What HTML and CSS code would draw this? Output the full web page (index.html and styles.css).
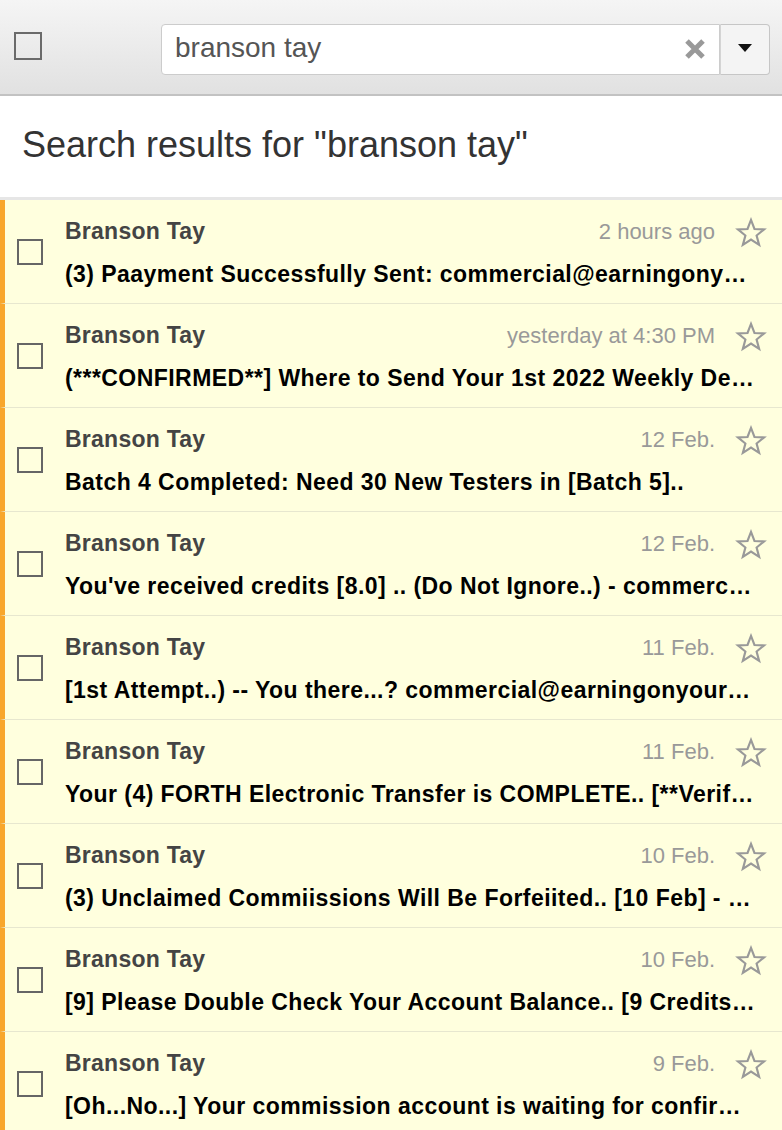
FILE: index.html
```html
<!DOCTYPE html>
<html>
<head>
    <meta charset="utf-8" />
    <title>Search results</title>
    <link rel="stylesheet" href="styles.css">
</head>
<body>
    <div class="toolbar">
        <span class="check check-all"></span>
        <div class="search">
            <div class="search-box">
                <span class="search-text">branson tay</span>
                <svg class="clear" width="22" height="22" viewBox="0 0 22 22">
                    <path d="M3 3 L19 19 M19 3 L3 19" stroke="#999" stroke-width="5" fill="none" />
                </svg>
            </div>
            <div class="search-drop"><span class="caret"></span></div>
        </div>
    </div>

    <div class="title">
        <h1>Search results for "branson tay"</h1>
    </div>

    <ul class="mails">
        <li class="mail">
            <span class="check"></span>
            <div class="mail-body">
                <div class="mail-top">
                    <strong class="sender">Branson Tay</strong>
                    <span class="date">2 hours ago</span>
                    <svg class="star" viewBox="0 0 24 24"><polygon points="12,2.2 14.6,9 21.8,9.3 16.2,13.9 18.1,20.9 12,16.9 5.9,20.9 7.8,13.9 2.2,9.3 9.4,9" /></svg>
                </div>
                <p class="subject">(3) Paayment Successfully Sent: commercial@earningonyourtime.com</p>
            </div>
        </li>
        <li class="mail">
            <span class="check"></span>
            <div class="mail-body">
                <div class="mail-top">
                    <strong class="sender">Branson Tay</strong>
                    <span class="date">yesterday at 4:30 PM</span>
                    <svg class="star" viewBox="0 0 24 24"><polygon points="12,2.2 14.6,9 21.8,9.3 16.2,13.9 18.1,20.9 12,16.9 5.9,20.9 7.8,13.9 2.2,9.3 9.4,9" /></svg>
                </div>
                <p class="subject">(***CONFIRMED**] Where to Send Your 1st 2022 Weekly Deposit</p>
            </div>
        </li>
        <li class="mail">
            <span class="check"></span>
            <div class="mail-body">
                <div class="mail-top">
                    <strong class="sender">Branson Tay</strong>
                    <span class="date">12 Feb.</span>
                    <svg class="star" viewBox="0 0 24 24"><polygon points="12,2.2 14.6,9 21.8,9.3 16.2,13.9 18.1,20.9 12,16.9 5.9,20.9 7.8,13.9 2.2,9.3 9.4,9" /></svg>
                </div>
                <p class="subject">Batch 4 Completed: Need 30 New Testers in [Batch 5]..</p>
            </div>
        </li>
        <li class="mail">
            <span class="check"></span>
            <div class="mail-body">
                <div class="mail-top">
                    <strong class="sender">Branson Tay</strong>
                    <span class="date">12 Feb.</span>
                    <svg class="star" viewBox="0 0 24 24"><polygon points="12,2.2 14.6,9 21.8,9.3 16.2,13.9 18.1,20.9 12,16.9 5.9,20.9 7.8,13.9 2.2,9.3 9.4,9" /></svg>
                </div>
                <p class="subject">You've received credits [8.0] .. (Do Not Ignore..) - commercial@earningonyourtime.com</p>
            </div>
        </li>
        <li class="mail">
            <span class="check"></span>
            <div class="mail-body">
                <div class="mail-top">
                    <strong class="sender">Branson Tay</strong>
                    <span class="date">11 Feb.</span>
                    <svg class="star" viewBox="0 0 24 24"><polygon points="12,2.2 14.6,9 21.8,9.3 16.2,13.9 18.1,20.9 12,16.9 5.9,20.9 7.8,13.9 2.2,9.3 9.4,9" /></svg>
                </div>
                <p class="subject">[1st Attempt..) -- You there...? commercial@earningonyourtime.com</p>
            </div>
        </li>
        <li class="mail">
            <span class="check"></span>
            <div class="mail-body">
                <div class="mail-top">
                    <strong class="sender">Branson Tay</strong>
                    <span class="date">11 Feb.</span>
                    <svg class="star" viewBox="0 0 24 24"><polygon points="12,2.2 14.6,9 21.8,9.3 16.2,13.9 18.1,20.9 12,16.9 5.9,20.9 7.8,13.9 2.2,9.3 9.4,9" /></svg>
                </div>
                <p class="subject">Your (4) FORTH Electronic Transfer is COMPLETE.. [**Verification Needed**]</p>
            </div>
        </li>
        <li class="mail">
            <span class="check"></span>
            <div class="mail-body">
                <div class="mail-top">
                    <strong class="sender">Branson Tay</strong>
                    <span class="date">10 Feb.</span>
                    <svg class="star" viewBox="0 0 24 24"><polygon points="12,2.2 14.6,9 21.8,9.3 16.2,13.9 18.1,20.9 12,16.9 5.9,20.9 7.8,13.9 2.2,9.3 9.4,9" /></svg>
                </div>
                <p class="subject">(3) Unclaimed Commiissions Will Be Forfeiited.. [10 Feb] - commercial@earningonyourtime.com</p>
            </div>
        </li>
        <li class="mail">
            <span class="check"></span>
            <div class="mail-body">
                <div class="mail-top">
                    <strong class="sender">Branson Tay</strong>
                    <span class="date">10 Feb.</span>
                    <svg class="star" viewBox="0 0 24 24"><polygon points="12,2.2 14.6,9 21.8,9.3 16.2,13.9 18.1,20.9 12,16.9 5.9,20.9 7.8,13.9 2.2,9.3 9.4,9" /></svg>
                </div>
                <p class="subject">[9] Please Double Check Your Account Balance.. [9 Credits Pending]</p>
            </div>
        </li>
        <li class="mail">
            <span class="check"></span>
            <div class="mail-body">
                <div class="mail-top">
                    <strong class="sender">Branson Tay</strong>
                    <span class="date">9 Feb.</span>
                    <svg class="star" viewBox="0 0 24 24"><polygon points="12,2.2 14.6,9 21.8,9.3 16.2,13.9 18.1,20.9 12,16.9 5.9,20.9 7.8,13.9 2.2,9.3 9.4,9" /></svg>
                </div>
                <p class="subject">[Oh...No...] Your commission account is waiting for confirmation</p>
            </div>
        </li>
    </ul>
</body>
</html>
```

FILE: styles.css
```css
* { margin: 0; border: 0; padding: 0; box-sizing: border-box; }

body {
    background: #ffffde;
    font-family: "Liberation Sans", Arial, sans-serif;
    overflow: hidden;
}

.check {
    display: block;
    flex: none;
    width: 26px;
    height: 26px;
    border: 2px solid #666;
}

/* top bar with search */
.toolbar {
    height: 96px;
    padding: 0 12px 0 14px;
    display: flex;
    align-items: center;
    background: linear-gradient(#f5f5f5, #e1e1e1);
    border-bottom: 2px solid #c2c2c2;
}

.toolbar .check-all {
    width: 28px;
    height: 28px;
    border-color: #6a6a6a;
    margin-top: -2px;
}

.search {
    flex: 1;
    margin-left: 119px;
    height: 51px;
    margin-top: 4px;
    display: flex;
}

.search-box {
    flex: 1;
    display: flex;
    align-items: center;
    padding: 0 13px 0 13px;
    background: #fff;
    border: 1px solid #ccc;
    border-radius: 4px 0 0 4px;
}

.search-text {
    flex: 1;
    font-size: 28px;
    color: #555;
    padding-bottom: 3px;
}

.clear { display: block; }

.search-drop {
    width: 50px;
    display: flex;
    align-items: center;
    justify-content: center;
    background: #f4f4f4;
    border: 1px solid #c6c6c6;
    border-left: 1px solid #d4d4d4;
    border-radius: 0 4px 4px 0;
}

.caret {
    width: 0;
    height: 0;
    border-left: 7.5px solid transparent;
    border-right: 7.5px solid transparent;
    border-top: 8px solid #111;
    margin-bottom: 3px;
}

.title {
    height: 104px;
    padding-left: 22px;
    display: flex;
    align-items: center;
    background: #fff;
    border-bottom: 3px solid #e6e6e6;
}

.title h1 {
    font-size: 36px;
    font-weight: normal;
    color: #333;
    padding-bottom: 4px;
}

/* result list */
.mails { list-style-type: none; }

.mail {
    height: 104px;
    display: flex;
    align-items: center;
    padding-left: 12px;
    border-left: 5px solid #f8a62c;
    border-bottom: 1px solid #e7e7cf;
    background: #ffffde;
}

.mail-body {
    flex: 1;
    min-width: 0;
    margin-left: 22px;
    padding-right: 15px;
    padding-top: 2px;
}

.mail-top {
    display: flex;
    align-items: center;
    height: 26px;
    margin-bottom: 16px;
}

.sender {
    flex: 1;
    font-size: 23px;
    letter-spacing: 0.25px;
    color: #444;
}

.date {
    font-size: 22px;
    color: #999;
    margin-right: 20px;
}

.star {
    width: 32px;
    height: 32px;
    fill: none;
    stroke: #999;
    stroke-width: 1.6;
    stroke-linejoin: miter;
    margin-top: 2px;
}

.subject {
    font-size: 23px;
    font-weight: bold;
    letter-spacing: 0.45px;
    line-height: 26px;
    color: #000;
    white-space: nowrap;
    overflow: hidden;
    text-overflow: ellipsis;
    margin-right: 12px;
}
```
